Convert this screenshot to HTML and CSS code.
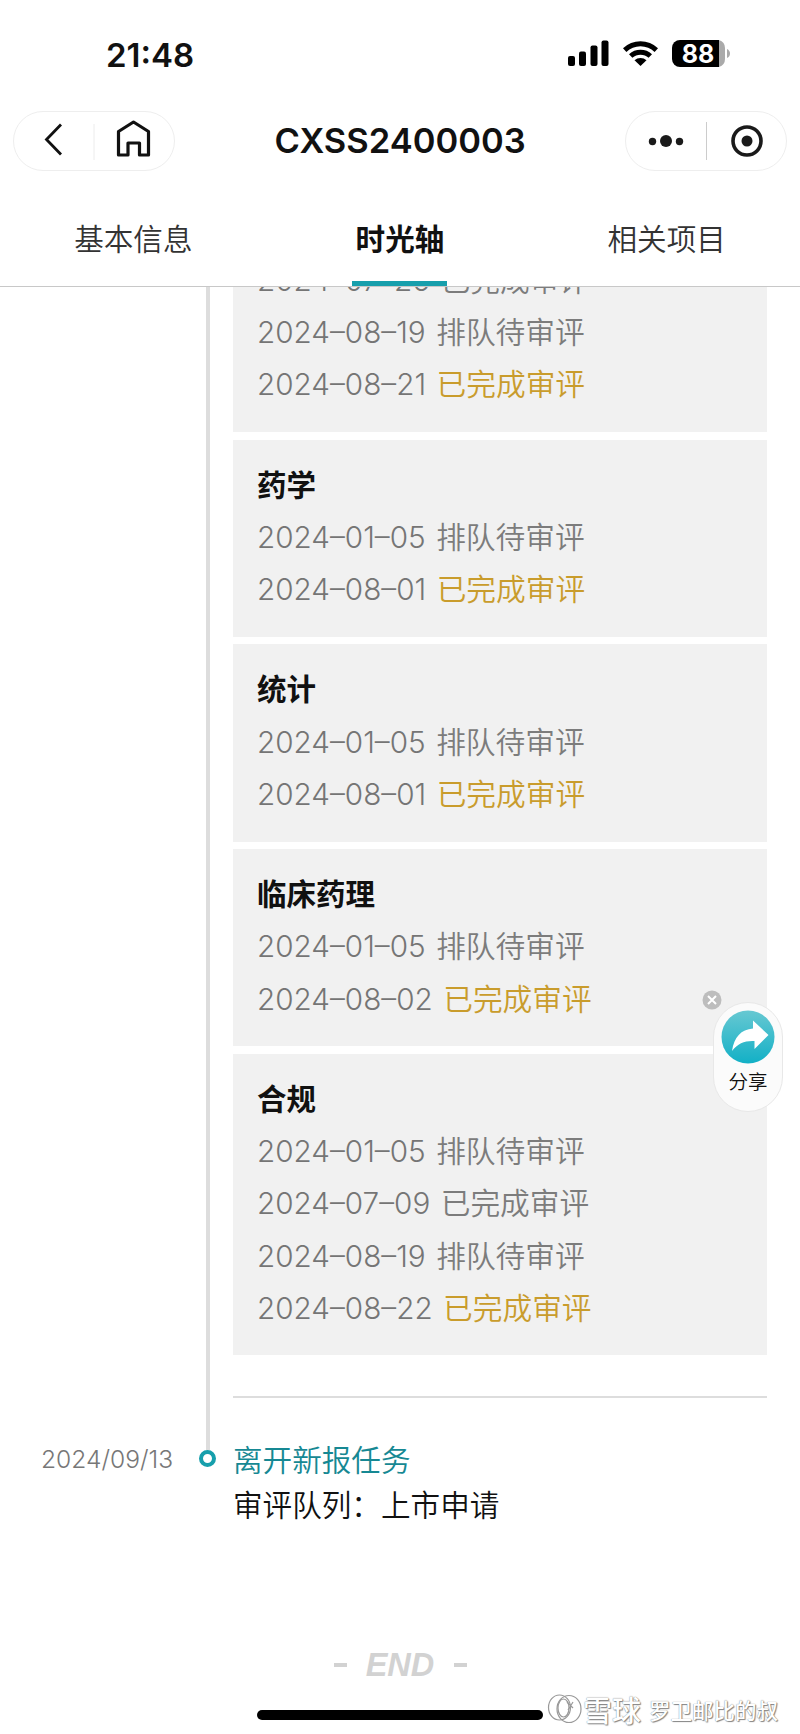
FILE: index.html
```html
<!DOCTYPE html>
<html lang="zh-CN">
<head>
<meta charset="utf-8">
<title>CXSS2400003</title>
<link rel="stylesheet" href="styles.css">
</head>
<body>
<div class="screen">
  <header class="top">
    <div class="status">
      <span class="clock">21:48</span>
      <svg class="status-icons" width="164" height="30" viewBox="0 0 164 30">
        <rect x="1" y="17" width="7" height="10" rx="2"/><rect x="12" y="12.500" width="7" height="14.500" rx="2"/><rect x="23.500" y="6.500" width="7" height="20.500" rx="2"/><rect x="34.500" y="1.500" width="7" height="25.500" rx="2"/>
        <path d="M56 9.300A25 25 0 0 1 91 9.300L87.600 13A20 20 0 0 0 59.400 13Z"/>
        <path d="M62 15.300A17 17 0 0 1 85 15.300L81.600 18.800A12 12 0 0 0 65.400 18.800Z"/>
        <path d="M67.500 21.300A9 9 0 0 1 79.500 21.300L73.500 27Z"/>
        <path d="M113 1h39v27h-39a8 8 0 0 1-8-8V9a8 8 0 0 1 8-8z"/>
        <path d="M152 1q6 2 6 8v11q0 6-6 8zM160 10q3 1.500 3 4.500t-3 4.500z" fill="#aaa"/>
        <text x="131" y="23.500" class="battery">88</text>
      </svg>
    </div>
    <div class="nav">
      <div class="pill">
        <svg width="160" height="58" viewBox="0 0 160 58" fill="none" stroke="#111">
          <path d="M47 12.500L32.500 27.500L47 42.500" stroke-width="2.800"/>
          <path d="M80 12v36" stroke="#ececec"/>
          <path d="M104.500 43V19.500L119.500 10L134.500 19.500V43H125.500V31H114V43Z" stroke-width="3.200" stroke-linejoin="round"/>
        </svg>
      </div>
      <h1 class="title">CXSS2400003</h1>
      <div class="pill">
        <svg width="160" height="58" viewBox="0 0 160 58" fill="#1a1a1a">
          <circle cx="26.500" cy="29.500" r="3.700"/><circle cx="40" cy="29" r="6"/><circle cx="53.500" cy="29.500" r="3.700"/>
          <path d="M80.500 10v38" stroke="#ccc"/>
          <circle cx="121" cy="29" r="14" fill="none" stroke="#1a1a1a" stroke-width="3.600"/><circle cx="121" cy="29" r="5.500"/>
        </svg>
      </div>
    </div>
    <nav class="tabs">
      <span class="tab">基本信息</span>
      <span class="tab tab-active">时光轴</span>
      <span class="tab">相关项目</span>
    </nav>
  </header>

  <main class="timeline">
    <div class="entry">
      <div class="when"></div>
      <div class="rail"></div>
      <div class="cards">
        <section class="card card-first">
          <p class="row"><span>2024–07–26</span><span>已完成审评</span></p>
          <p class="row"><span>2024–08–19</span><span>排队待审评</span></p>
          <p class="row"><span>2024–08–21</span><span class="done">已完成审评</span></p>
        </section>
        <section class="card">
          <h2 class="name">药学</h2>
          <p class="row"><span>2024–01–05</span><span>排队待审评</span></p>
          <p class="row"><span>2024–08–01</span><span class="done">已完成审评</span></p>
        </section>
        <section class="card">
          <h2 class="name">统计</h2>
          <p class="row"><span>2024–01–05</span><span>排队待审评</span></p>
          <p class="row"><span>2024–08–01</span><span class="done">已完成审评</span></p>
        </section>
        <section class="card">
          <h2 class="name">临床药理</h2>
          <p class="row"><span>2024–01–05</span><span>排队待审评</span></p>
          <p class="row"><span>2024–08–02</span><span class="done">已完成审评</span></p>
        </section>
        <section class="card">
          <h2 class="name">合规</h2>
          <p class="row"><span>2024–01–05</span><span>排队待审评</span></p>
          <p class="row"><span>2024–07–09</span><span>已完成审评</span></p>
          <p class="row"><span>2024–08–19</span><span>排队待审评</span></p>
          <p class="row"><span>2024–08–22</span><span class="done">已完成审评</span></p>
        </section>
        <hr class="divider">
      </div>
    </div>
    <div class="entry">
      <div class="when">2024/09/13</div>
      <div class="marker"></div>
      <div class="event">
        <p class="event-name">离开新报任务</p>
        <p class="event-text">审评队列：上市申请</p>
      </div>
    </div>
  </main>

  <footer class="footer">
    <div class="end"><i class="dash"></i><b>END</b><i class="dash"></i></div>
    <div class="home-bar"></div>
  </footer>

  <svg class="close" width="20" height="20" viewBox="0 0 20 20"><circle cx="10" cy="10" r="9.500" fill="#bdbdbd"/><path d="M6 6l8 8M14 6l-8 8" stroke="#fff" stroke-width="2"/></svg>
  <div class="share">
    <svg width="54" height="54" viewBox="0 0 54 54">
      <defs><linearGradient id="g" x1="0" y1="0" x2="0" y2="1"><stop offset="0" stop-color="#67c8d2"/><stop offset="1" stop-color="#12b0c6"/></linearGradient></defs>
      <circle cx="27" cy="27" r="26.500" fill="url(#g)"/>
      <path d="M11 41C13 27 20 19.500 32 18.500V10.500L47.500 25L33.500 39V31C24 30.500 17 33 11 41Z" fill="#fff"/>
    </svg>
    <span>分享</span>
  </div>
  <div class="watermark">
    <svg width="36" height="30" viewBox="0 0 36 30" fill="none" stroke="#999" stroke-width="1.200"><ellipse cx="12.500" cy="13.500" rx="11" ry="12.500"/><ellipse cx="22" cy="15" rx="12" ry="13.500"/><ellipse cx="16.500" cy="14" rx="5.500" ry="9"/><path d="M20 8l6 6M26 8l-5 8"/></svg>
    <span class="brand">雪球</span><span class="author">罗卫邮比的叔</span>
  </div>
</div>
</body>
</html>
```
FILE: styles.css
```css
* { box-sizing: border-box; }
body, h1, h2, p { margin: 0; }
body { background: #fff; font-family: Inter, "Noto Sans CJK SC", sans-serif; color: #111; }
.screen { position: relative; width: 800px; height: 1734px; overflow: hidden; display: flex; flex-direction: column; }
.top { height: 287px; flex: none; border-bottom: 1px solid #c8c8c8; display: flex; flex-direction: column; }
.status { height: 110px; padding: 39px 69px 0 106px; display: flex; justify-content: space-between; align-items: flex-start; }
.clock { font-size: 33px; line-height: 32px; font-weight: 600; }
.battery { font: 700 25px/1 Inter, sans-serif; fill: #fff; text-anchor: middle; }
.nav { padding: 1px 13px 0; display: flex; justify-content: space-between; }
.pill { width: 162px; height: 60px; border: 1px solid #eee; border-radius: 30px; }
.pill svg { display: block; }
.title { font-size: 34.500px; line-height: 60px; font-weight: 600; }
.tabs { flex: 1; display: grid; grid-template-columns: repeat(3, 1fr); justify-items: center; }
.tab { width: 120px; text-align: center; font-size: 29.600px; line-height: 44px; padding-top: 46px; color: #333; font-weight: 350; white-space: nowrap; }
.tab-active { width: 95px; font-weight: 700; color: #111; border-bottom: 5px solid #179fac; }
.timeline { flex: none; height: 1273px; overflow: hidden; }
.entry { display: grid; grid-template-columns: 206px 4px 534px; column-gap: 0; }
.rail { background: #ddd; height: 1163px; margin-bottom: -12px; }
.cards { margin-left: 23px; width: 534px; height: 1151px; display: flex; flex-direction: column; gap: 7.700px; }
.card { background: #f1f1f1; padding: 19px 24px 21.500px; }
.card-first { height: 145px; flex: none; display: flex; flex-direction: column; justify-content: flex-end; }
.name { font-size: 29.500px; line-height: 52.200px; font-weight: 700; }
.row { display: flex; flex: none; gap: 10.500px; font-size: 29.700px; line-height: 52.200px; height: 52.200px; font-weight: 350; color: #7c7c7c; white-space: nowrap; }
.row span:first-child { font-weight: 300; color: #757575; }
.row .done { color: #c99c2c; }
.divider { width: 534px; border: 0; height: 2px; background: #ddd; margin: 33px 0 0; }
.when { font-size: 24.600px; line-height: 30px; font-weight: 300; color: #777; padding: 6px 0 0 41px; white-space: nowrap; }
.marker { width: 17px; height: 17px; margin: 12px 0 0 -7px; border: 4px solid #179fac; border-radius: 50%; }
.event { margin-left: 23px; font-size: 29.600px; line-height: 45px; font-weight: 350; }
.event-name { color: #168893; }
.footer { flex: 1; display: flex; flex-direction: column; align-items: center; }
.end { margin-top: 88px; width: 133px; display: flex; justify-content: space-between; align-items: center; font: italic 700 32.500px/34px "Liberation Sans", sans-serif; color: #d2d2d2; }
.dash { width: 13px; height: 4px; background: #d2d2d2; }
.home-bar { width: 286px; height: 10px; border-radius: 5px; background: #000; margin-top: 28px; }
.close { position: absolute; left: 702px; top: 990px; }
.share { position: absolute; left: 713px; top: 1002px; width: 70px; height: 110px; border: 1px solid #e8e8e8; border-radius: 35px; background: #fbfbfb; display: flex; flex-direction: column; align-items: center; padding-top: 7px; font-size: 19.500px; line-height: 32px; font-weight: 350; gap: 2px; }
.watermark { position: absolute; left: 547px; top: 1692px; display: flex; align-items: center; height: 34px; color: #fff; font-weight: 500; text-shadow: 0 0 1px #666, 1px 1px 1px #888; white-space: nowrap; }
.brand { font-size: 29px; margin-right: 8px; }
.author { font-size: 21.500px; }
```
